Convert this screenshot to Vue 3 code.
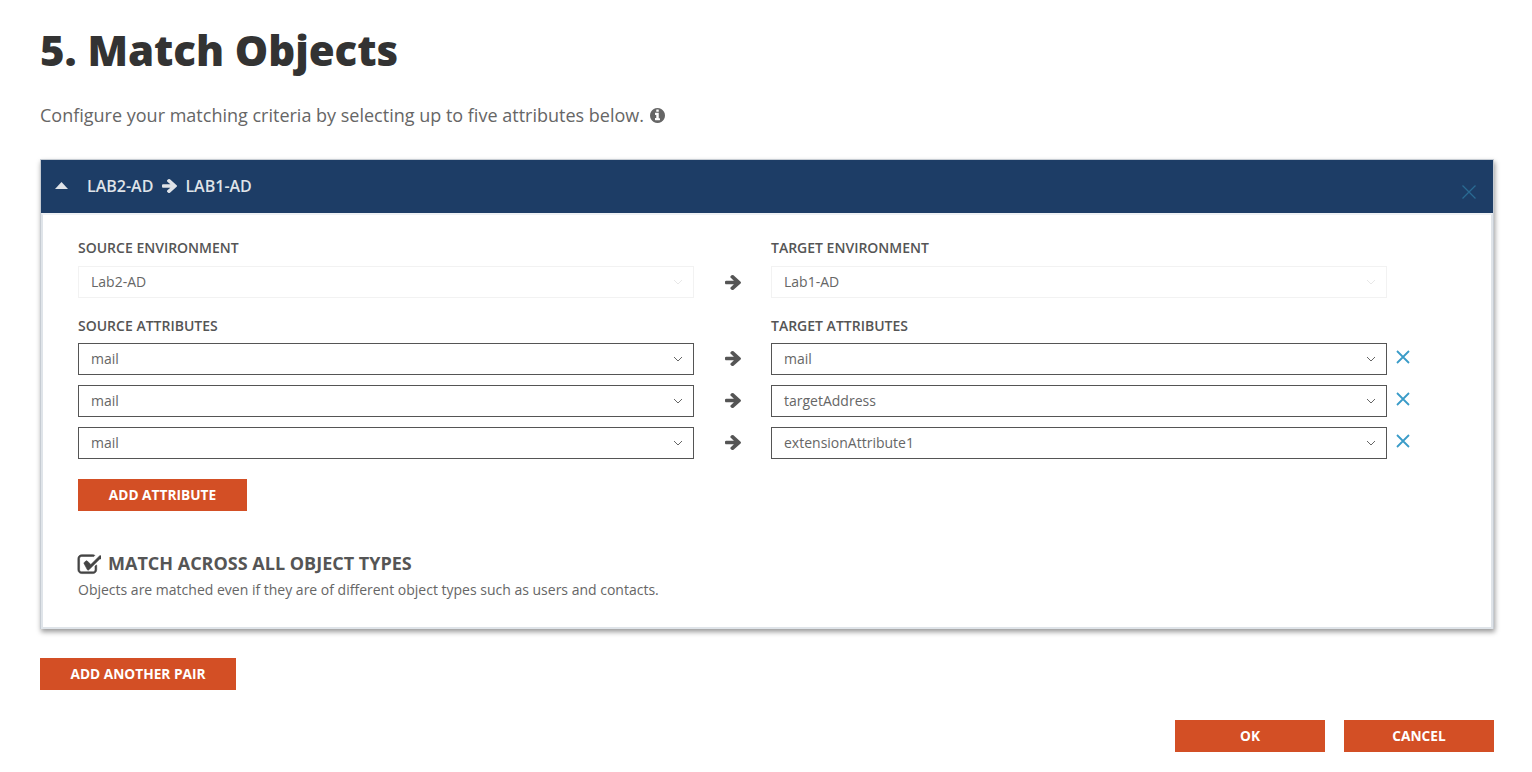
<script setup>
const rows = [
  { source: 'mail', target: 'mail' },
  { source: 'mail', target: 'targetAddress' },
  { source: 'mail', target: 'extensionAttribute1' }
]
const arrowPath = 'M1600 960q0 54-37 91l-651 651q-39 37-91 37-51 0-90-37l-75-75q-38-38-38-91t38-91l293-293H245q-52 0-84.500-37.500T128 1024V896q0-53 32.500-90.500T245 768h704L656 474q-38-36-38-90t38-90l75-75q38-38 90-38 53 0 91 38l651 651q37 35 37 90z'
</script>

<template>
  <div class="page">
    <h1 class="title">5. Match Objects</h1>
    <p class="intro">
      Configure your matching criteria by selecting up to five attributes below.
      <svg class="info" viewBox="128 128 1536 1536" width="15" height="15">
        <path fill="#666" d="M1152 1376v-160q0-14-9-23t-23-9h-96V640q0-14-9-23t-23-9H672q-14 0-23 9t-9 23v160q0 14 9 23t23 9h96v320h-96q-14 0-23 9t-9 23v160q0 14 9 23t23 9h448q14 0 23-9t9-23zm-128-896V320q0-14-9-23t-23-9H800q-14 0-23 9t-9 23v160q0 14 9 23t23 9h192q14 0 23-9t9-23zm640 416q0 209-103 385.500T1281.500 1561 896 1664t-385.500-103T231 1281.500 128 896t103-385.500T510.500 231 896 128t385.500 103T1561 510.500 1664 896z" />
      </svg>
    </p>

    <section class="card">
      <header class="card-head">
        <svg class="caret" viewBox="0 0 13 7" width="13" height="7"><path d="M6.500 0l6.500 7H0z" fill="#dfe3e8" /></svg>
        <span>LAB2-AD</span>
        <svg class="head-arrow" viewBox="128 181 1472 1558" preserveAspectRatio="none" width="15" height="14"><path :d="arrowPath" fill="#dfe3e8" /></svg>
        <span>LAB1-AD</span>
        <svg class="head-close" viewBox="0 0 14 14" width="14" height="14"><path d="M0.5 0.5l13 13M13.5 0.5l-13 13" stroke="#2a6a93" stroke-width="1.3" fill="none" /></svg>
      </header>

      <div class="card-body">
        <div class="row label-row">
          <div class="label">SOURCE ENVIRONMENT</div>
          <div></div>
          <div class="label">TARGET ENVIRONMENT</div>
        </div>
        <div class="row">
          <div class="select disabled">Lab2-AD<svg class="chev" viewBox="0 0 10 6" width="10" height="6"><path d="M1 1l4 4 4-4" /></svg></div>
          <div class="arrow-cell"><svg viewBox="128 181 1472 1558" preserveAspectRatio="none" width="16" height="15"><path :d="arrowPath" fill="#555" /></svg></div>
          <div class="select disabled">Lab1-AD<svg class="chev" viewBox="0 0 10 6" width="10" height="6"><path d="M1 1l4 4 4-4" /></svg></div>
        </div>
        <div class="row label-row second">
          <div class="label">SOURCE ATTRIBUTES</div>
          <div></div>
          <div class="label">TARGET ATTRIBUTES</div>
        </div>
        <div v-for="(row, i) in rows" :key="i" class="row attr-row">
          <div class="select">{{ row.source }}<svg class="chev" viewBox="0 0 10 6" width="10" height="6"><path d="M1 1l4 4 4-4" /></svg></div>
          <div class="arrow-cell"><svg viewBox="128 181 1472 1558" preserveAspectRatio="none" width="16" height="15"><path :d="arrowPath" fill="#555" /></svg></div>
          <div class="select">{{ row.target }}<svg class="chev" viewBox="0 0 10 6" width="10" height="6"><path d="M1 1l4 4 4-4" /></svg></div>
          <div class="remove"><svg viewBox="0 0 14 14" width="14" height="14"><path d="M1 1l12 12M13 1L1 13" stroke="#3a9cc8" stroke-width="1.8" fill="none" /></svg></div>
        </div>

        <button class="btn add-attr">ADD ATTRIBUTE</button>

        <div class="match">
          <svg class="check" viewBox="0 0 1792 1792" width="24" height="24">
            <path fill="#444" stroke="#444" stroke-width="45" d="M1472 930v318q0 119-84.500 203.500T1184 1536H352q-119 0-203.500-84.500T64 1248V416q0-119 84.500-203.500T352 128h832q63 0 117 25 15 7 18 23 3 17-9 29l-49 49q-10 10-23 10-3 0-9-2-23-6-45-6H352q-66 0-113 47t-47 113v832q0 66 47 113t113 47h832q66 0 113-47t47-113V994q0-13 9-22l64-64q10-10 23-10 6 0 12 3 20 8 20 29zm231-489l-814 814q-24 24-57 24t-57-24L545 825q-24-24-24-57t24-57l110-110q24-24 57-24t57 24l263 263 647-647q24-24 57-24t57 24l110 110q24 24 24 57t-24 57z" />
          </svg>
          <span>MATCH ACROSS ALL OBJECT TYPES</span>
        </div>
        <p class="match-note">Objects are matched even if they are of different object types such as users and contacts.</p>
      </div>
    </section>

    <button class="btn add-pair">ADD ANOTHER PAIR</button>

    <div class="actions">
      <button class="btn action">OK</button>
      <button class="btn action">CANCEL</button>
    </div>
  </div>
</template>

<style>
html, body { margin: 0; background: #fff; }
</style>

<style scoped>
.page {
  box-sizing: border-box;
  width: 1532px;
  height: 772px;
  padding: 0 38px 0 40px;
  font-family: "Open Sans", "Liberation Sans", sans-serif;
  color: #555;
  overflow: hidden;
}
.title {
  margin: 0;
  padding-top: 23px;
  font-size: 42px;
  line-height: 54px;
  font-weight: 800;
  letter-spacing: -0.07px;
  color: #333;
}
.intro {
  margin: 25px 0 0;
  font-size: 18px;
  line-height: 26px;
  color: #666;
  display: flex;
  align-items: center;
  gap: 6px;
}
.info { flex: none; }
.card {
  margin-top: 31px;
  height: 470px;
  box-sizing: border-box;
  border: 1px solid #c6ccd3;
  border-bottom: 0;
  box-shadow: 1px 3px 5px rgba(0, 0, 0, 0.4);
  background: #fff;
}
.card-head {
  position: relative;
  height: 53px;
  padding: 0 0 2px 14px;
  background: #1d3d66;
  color: #dfe3e8;
  display: flex;
  align-items: center;
  font-size: 16px;
  font-weight: 600;
  box-sizing: border-box;
}
.caret { margin-right: 19px; }
.head-arrow { margin: 0 8px 0 9px; }
.head-close { position: absolute; right: 17px; top: 25px; }
.card-body {
  box-sizing: border-box;
  height: 416px;
  border: 2px solid #dfe4e9;
  border-top: 2px solid #eef1f4;
  padding: 22px 0 0 35px;
}
.row {
  display: grid;
  grid-template-columns: 616px 77px 616px 32px;
  align-items: center;
}
.label-row { height: 22px; margin-bottom: 7px; }
.label-row.second { margin-top: 17px; margin-bottom: 6px; }
.attr-row + .attr-row { margin-top: 10px; }
.attr-row .arrow-cell { padding-bottom: 2px; }
.label {
  font-size: 14px;
  font-weight: 600;
  line-height: 22px;
  color: #555;
}
.select {
  box-sizing: border-box;
  border: 1px solid #555;
  height: 32px;
  padding: 0 12px 2px;
  display: flex;
  align-items: center;
  justify-content: space-between;
  font-size: 14px;
  color: #666;
}
.select.disabled { border-color: #f2f2f2; }
.chev { margin-right: -2px; position: relative; top: 1px; }
.chev path { fill: none; stroke: #666; stroke-width: 1; }
.disabled .chev path { stroke: #e8e8e8; }
.arrow-cell { display: flex; align-items: center; justify-content: center; }
.remove { display: flex; align-items: center; padding-left: 9px; padding-bottom: 4px; box-sizing: border-box; height: 32px; }
.btn {
  display: block;
  border: 0;
  height: 32px;
  background: #d34f25;
  color: #fff;
  font-family: inherit;
  font-size: 13.7px;
  font-weight: 700;
  padding: 0 0 2px;
}
.add-attr { width: 169px; margin-top: 20px; }
.match {
  display: flex;
  align-items: center;
  margin-top: 39px;
  height: 26px;
  font-size: 18px;
  font-weight: 700;
  line-height: 26px;
  color: #555;
}
.check { align-self: flex-end; margin: 0 7px -1px -1px; }
.match-note { margin: 4px 0 0; font-size: 14px; line-height: 20px; color: #666; }
.add-pair { width: 196px; margin-top: 29px; }
.actions { display: flex; justify-content: flex-end; gap: 19px; margin-top: 30px; }
.action { width: 150px; }
</style>
